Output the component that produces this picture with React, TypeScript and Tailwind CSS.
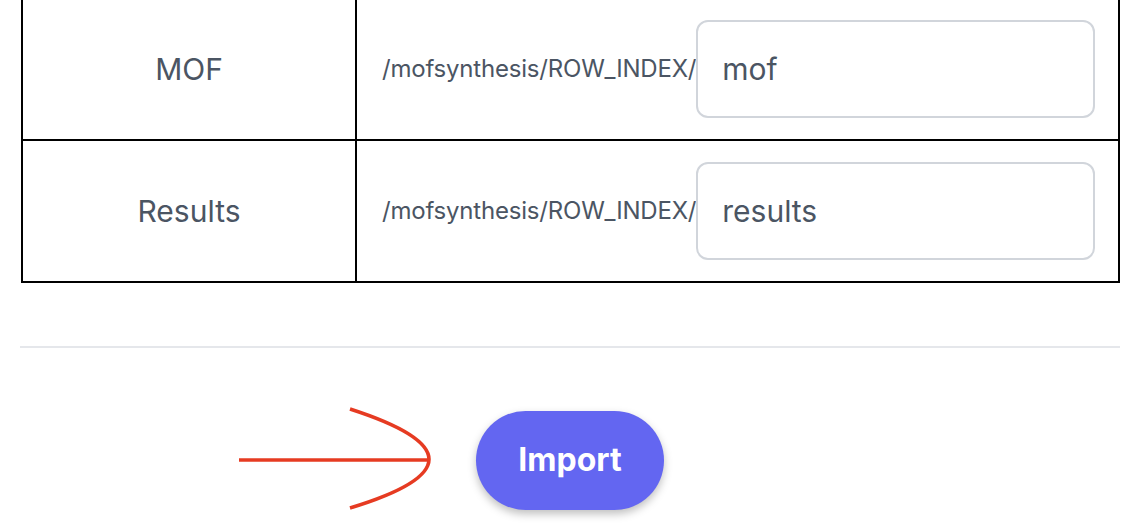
import React from "react";

const rows = [
  { label: "MOF", value: "mof" },
  { label: "Results", value: "results" },
];

function Arrow() {
  return (
    <svg width="196" height="106" viewBox="0 0 196 106" fill="none">
      <path d="M3 53 H193" stroke="#e63b22" strokeWidth="3.6" />
      <path d="M114 2 Q272 53 114 101" stroke="#e63b22" strokeWidth="3.6" />
    </svg>
  );
}

export default function App() {
  return (
    <div className="w-[1146px] h-[530px] overflow-hidden bg-white font-['Inter',sans-serif]">
      <div className="pl-[21px]">
        <table className="-mt-[3px] w-[1099px] table-fixed border-collapse border-2 border-black">
          <tbody>
            {rows.map((r) => (
              <tr key={r.label} className="h-[142px]">
                <td className="w-[334px] border-2 border-black text-center text-[30px] text-[#4b5563]">
                  {r.label}
                </td>
                <td className="border-2 border-black pl-[25px] pr-[26px]">
                  <div className="flex items-center">
                    <span className="flex-1 text-[24px] text-[#4b5563] tracking-[-0.2px]">
                      /mofsynthesis/ROW_INDEX/
                    </span>
                    <input
                      defaultValue={r.value}
                      className="w-[399px] h-[98px] rounded-[12px] border-2 border-[#d1d5db] px-[24px] text-[30px] text-[#4b5563] outline-none"
                    />
                  </div>
                </td>
              </tr>
            ))}
          </tbody>
        </table>
      </div>
      <div className="ml-[20px] mt-[63px] w-[1100px] h-[2px] bg-[#e5e7eb]" />
      <div className="mt-[59px] flex items-center pl-[236px]">
        <Arrow />
        <button className="ml-[44px] w-[188px] h-[99px] rounded-full bg-[#6366f1] text-[32px] font-bold text-white shadow-[0_4px_8px_rgba(0,0,0,0.25)]">
          Import
        </button>
      </div>
    </div>
  );
}
